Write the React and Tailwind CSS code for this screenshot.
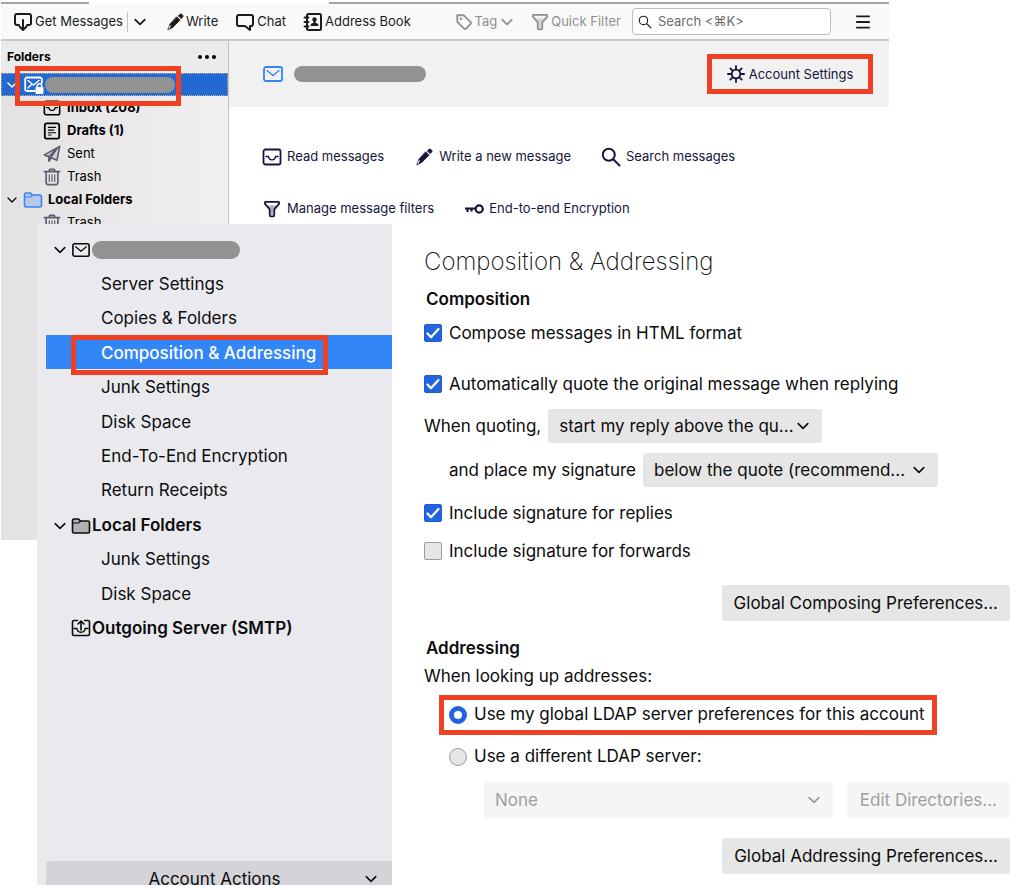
import React from "react";

function Svg({ size = 20, className = "", children, sw = 2 }) {
  return (
    <svg
      width={size}
      height={size}
      viewBox="0 0 20 20"
      fill="none"
      stroke="currentColor"
      strokeWidth={sw}
      strokeLinecap="round"
      strokeLinejoin="round"
      aria-hidden="true"
      className={"shrink-0 " + className}
    >
      {children}
    </svg>
  );
}

const Chevron = ({ size = 12, sw = 3, className = "" }) => (
  <Svg size={size} sw={sw} className={className}>
    <path d="M2 6l8 8 8-8" />
  </Svg>
);

const GetIcon = () => (
  <Svg>
    <path d="M6 13H4a2 2 0 0 1-2-2V4a2 2 0 0 1 2-2h12a2 2 0 0 1 2 2v7a2 2 0 0 1-2 2h-2" />
    <path d="M10 8v10M6.500 14.500L10 18l3.500-3.500" />
  </Svg>
);

const PencilIcon = ({ size = 18 }) => (
  <Svg size={size} sw={1}>
    <path d="M12 4.500l3.500 3.500-8 8-5.500 2.500 2.500-6z" fill="currentColor" />
    <path d="M14 3l1.500-1.500a1.500 1.500 0 0 1 2 0l1 1a1.500 1.500 0 0 1 0 2L17 6z" fill="currentColor" />
    <path d="M4.800 14.200l-1.600 2.800" stroke="#fff" strokeWidth="1.200" />
  </Svg>
);

const ChatIcon = () => (
  <Svg>
    <path d="M4 3h12a2 2 0 0 1 2 2v7a2 2 0 0 1-2 2h-1v4l-5-4H4a2 2 0 0 1-2-2V5a2 2 0 0 1 2-2z" />
  </Svg>
);

const BookIcon = () => (
  <Svg>
    <rect x="4" y="2" width="14" height="16" rx="1.500" />
    <path d="M1.500 5.500h4M1.500 10h4M1.500 14.500h4" strokeWidth="1.800" />
    <circle cx="11.500" cy="7.500" r="2.200" fill="currentColor" stroke="none" />
    <path d="M7.500 14c0-2.500 1.500-3 4-3.500 2.500.5 4 1 4 3.500z" fill="currentColor" stroke="none" />
    <path d="M10.500 8.500h2v3h-2z" fill="currentColor" stroke="none" />
  </Svg>
);

const TagIcon = () => (
  <Svg size={18}>
    <path d="M2.500 2.500h6.500a2 2 0 0 1 1.400.6l7 7a1.500 1.500 0 0 1 0 2.100l-5.200 5.200a1.500 1.500 0 0 1-2.100 0l-7-7a2 2 0 0 1-.6-1.400z" />
    <circle cx="6.500" cy="6.500" r="1" fill="currentColor" strokeWidth="1" />
  </Svg>
);

const FunnelIcon = ({ size = 18 }) => (
  <Svg size={size}>
    <path d="M2.500 2h15L18 4l-5.500 6.500V17a1.200 1.200 0 0 1-1.200 1.200H8.700A1.200 1.200 0 0 1 7.500 17v-6.500L2 4z" />
    <path d="M5 6h10l-3.500 4.500v6h-3v-6z" fill="currentColor" fillOpacity=".35" stroke="none" />
  </Svg>
);

const SearchIcon = ({ size = 20, sw = 2 }) => (
  <Svg size={size} sw={sw}>
    <circle cx="7.800" cy="7.800" r="6" />
    <path d="M12.500 12.500L18.500 18.500" />
  </Svg>
);

const MailIcon = ({ size = 20, className = "" }) => (
  <Svg size={size} className={className} sw={1.8}>
    <rect x="1" y="3" width="18" height="14" rx="2" />
    <path d="M4 6.500l6 5 6-5" strokeWidth="1.400" />
  </Svg>
);

const InboxIcon = ({ size = 20, className = "" }) => (
  <Svg size={size} className={className} sw={1.8}>
    <rect x="1.500" y="2.500" width="17" height="15" rx="2" />
    <path d="M4 9.500h2.500c.5 4.500 6.500 4.500 7 0H16" strokeWidth="1.400" />
  </Svg>
);

const DraftIcon = () => (
  <Svg size={18} sw={2}>
    <rect x="2" y="1.500" width="16" height="17" rx="2" />
    <path d="M6 6h8M6 9h6M6 12h8M6 14.500h3" strokeWidth="1.200" />
  </Svg>
);

const SentIcon = () => (
  <Svg size={18} sw={1.8} className="text-[#5b5b72]">
    <path d="M18.500 1.500L1.500 11l5 2 9-9-7 10 7 3z" fill="currentColor" fillOpacity=".15" />
    <path d="M6.500 13v5l2.500-3.500" />
  </Svg>
);

const TrashIcon = () => (
  <Svg size={18} sw={1.8} className="text-[#5b5b72]">
    <path d="M1.500 4h17M7 4V2.500A1 1 0 0 1 8 1.500h4a1 1 0 0 1 1 1V4M3.500 4.500V16a2.500 2.500 0 0 0 2.500 2.500h8a2.500 2.500 0 0 0 2.500-2.500V4.500" />
    <path d="M7 7.500v7.500M10 7.500v7.500M13 7.500v7.500" strokeWidth="1.300" />
  </Svg>
);

const FolderIcon = ({ className = "", fill }) => (
  <Svg size={20} sw={1.6} className={className}>
    <path d="M1.500 15.500v-11A1.500 1.500 0 0 1 3 3h4.500l2 2H17a1.500 1.500 0 0 1 1.500 1.500v9A1.500 1.500 0 0 1 17 17H3a1.500 1.500 0 0 1-1.500-1.500z" fill={fill} />
    <path d="M2 7h5.500l2-2" strokeWidth="1.200" />
  </Svg>
);

const LockMailIcon = () => (
  <Svg size={20} className="text-white" sw={1.8}>
    <path d="M11 16H3a1.800 1.800 0 0 1-1.800-1.800V4.300A1.800 1.800 0 0 1 3 2.500h13a1.800 1.800 0 0 1 1.800 1.800V8" />
    <path d="M4 5.500l5.500 4.500L15 5.500M4 13l3.500-3.500" strokeWidth="1.400" />
    <rect x="11.500" y="12" width="8" height="7" rx="1" fill="currentColor" stroke="none" />
    <path d="M13.300 12v-1a2.200 2.200 0 0 1 4.400 0v1" strokeWidth="1.600" />
  </Svg>
);

const GearIcon = () => (
  <Svg size={18} sw={2}>
    <circle cx="10" cy="10" r="4.800" />
    <path d="M10 5V1M10 19v-4M5 10H1M19 10h-4M6.500 6.500L3.700 3.700M16.300 16.300l-2.800-2.800M6.500 13.500l-2.800 2.800M16.300 3.700l-2.800 2.800" />
  </Svg>
);

const KeyIcon = () => (
  <Svg size={20} sw={2.2}>
    <circle cx="15.200" cy="10" r="3.600" />
    <path d="M11.500 9.500H1M3.500 9.500v3.500M7.500 9.500v3" strokeLinecap="butt" />
  </Svg>
);

const OutgoingIcon = () => (
  <Svg size={20} sw={1.6}>
    <path d="M6.500 2.500H3A1.500 1.500 0 0 0 1.500 4v12A1.500 1.500 0 0 0 3 17.500h14a1.500 1.500 0 0 0 1.500-1.500V4A1.500 1.500 0 0 0 17 2.500h-3.500" />
    <path d="M10 12V3M7 6l3-3 3 3" />
    <path d="M3 10.500h3c0 5 8 5 8 0h3" strokeWidth="1.300" />
  </Svg>
);

const Redacted = ({ className }) => (
  <span className={"block rounded-full bg-[#929292] " + className} />
);

function ToolButton({ icon, children, className = "" }) {
  return (
    <button type="button" className={"flex items-center gap-[2px] whitespace-nowrap " + className}>
      {icon}
      <span className="pt-px">{children}</span>
    </button>
  );
}

function Toolbar() {
  return (
    <div className="flex h-[37px] items-center border-b-2 border-[#c6c6c6] bg-[#f9f9f9] pl-3 pr-[18px] text-[13px] text-[#1b1b1b]">
      <ToolButton icon={<GetIcon />}>Get Messages</ToolButton>
      <button type="button" aria-label="More" className="ml-1 flex h-5 items-center border-l border-[#c4c4c4] pl-[6px]">
        <Chevron />
      </button>
      <ToolButton icon={<PencilIcon />} className="ml-5">Write</ToolButton>
      <ToolButton icon={<ChatIcon />} className="ml-[17px]">Chat</ToolButton>
      <ToolButton icon={<BookIcon />} className="ml-[17px]">Address Book</ToolButton>
      <ToolButton icon={<TagIcon />} className="ml-auto text-[#8f8f8f]">
        <span className="flex items-center gap-1">
          Tag
          <Chevron />
        </span>
      </ToolButton>
      <ToolButton icon={<FunnelIcon />} className="ml-[18px] text-[#8f8f8f]">Quick Filter</ToolButton>
      <label className="ml-[11px] flex h-[27px] w-[199px] items-center gap-[6px] rounded border border-[#bdbdbd] bg-white px-[5px]">
        <SearchIcon size={14} sw={1.6} />
        <input
          type="text"
          aria-label="Search"
          placeholder="Search &lt;⌘K&gt;"
          className="w-full min-w-0 bg-transparent outline-none placeholder:text-[#6b6b6b]"
        />
      </label>
      <button type="button" aria-label="Menu" className="ml-[24px]">
        <Svg size={16} sw={2.2}>
          <path d="M1.500 3h17M1.500 10h17M1.500 17h17" strokeLinecap="butt" />
        </Svg>
      </button>
    </div>
  );
}

function FolderRow({ icon, label, bold }) {
  return (
    <li className="flex h-[23px] items-center pl-[42px]">
      <span className="flex w-6 shrink-0">{icon}</span>
      <span className={bold ? "font-bold" : ""}>{label}</span>
    </li>
  );
}

function FolderPane() {
  return (
    <aside className="flex w-[228px] shrink-0 flex-col border-r border-[#c2c2c2] bg-linear-to-r from-[#e3e1e1] to-[#f1efef] text-[13px] text-black">
      <div className="flex h-8 items-center justify-between bg-[#ebebeb] pl-[6px] pr-3">
        <h2 className="text-[12px] font-bold">Folders</h2>
        <button type="button" aria-label="Folder options" className="flex gap-[3px]">
          <span className="size-[4px] rounded-full bg-black" />
          <span className="size-[4px] rounded-full bg-black" />
          <span className="size-[4px] rounded-full bg-black" />
        </button>
      </div>
      <ul>
        <li className="relative flex h-[23px] items-center border border-dotted border-[#c3b98f] bg-[#2269d3] pl-[5px] text-white">
          <Chevron size={10} />
          <span className="ml-[7px] flex">
            <LockMailIcon />
          </span>
          <Redacted className="ml-[1px] h-4 w-[130px]" />
          <span className="pointer-events-none absolute -top-[8px] left-[13px] h-10 w-[166px] border-[5px] border-[#ee4023]" />
        </li>
        <FolderRow icon={<InboxIcon size={18} />} label="Inbox (208)" bold />
        <FolderRow icon={<DraftIcon />} label="Drafts (1)" bold />
        <FolderRow icon={<SentIcon />} label="Sent" />
        <FolderRow icon={<TrashIcon />} label="Trash" />
        <li className="flex h-[23px] items-center pl-[6px] font-bold">
          <Chevron size={10} sw={2.4} />
          <FolderIcon className="ml-[6px] mr-[5px] text-[#3b86f2]" fill="#b7c9ea" />
          Local Folders
        </li>
        <FolderRow icon={<TrashIcon />} label="Trash" />
      </ul>
    </aside>
  );
}

function ActionLink({ icon, children }) {
  return (
    <a href="#" className="flex items-center gap-[5px] whitespace-nowrap">
      <span className="flex w-5 justify-center">{icon}</span>
      <span>{children}</span>
    </a>
  );
}

function MailWindow() {
  return (
    <section className="mr-[135px] mt-[2px] flex h-[538px] flex-col pl-[1px] [grid-area:1/1]">
      <div className="flex h-[2px] shrink-0 justify-between">
        <span className="w-[88px] bg-[#a3a3a3]" />
        <span className="ml-[240px] flex-1 bg-[#a3a3a3]" />
      </div>
      <Toolbar />
      <div className="flex flex-1">
        <FolderPane />
        <div className="flex-1 text-[13px] text-[#15153c]">
          <div className="flex h-[66px] items-center bg-[#f1f1f1] pl-[34px] pr-4">
            <MailIcon className="text-[#3585f7]" />
            <Redacted className="ml-[11px] h-4 w-[132px]" />
            <button
              type="button"
              className="ml-auto flex h-10 w-[166px] items-center justify-center gap-1 whitespace-nowrap border-[5px] border-[#ee4023]"
            >
              <GearIcon />
              <span className="pt-px">Account Settings</span>
            </button>
          </div>
          <nav className="flex flex-col gap-8 pl-[33px] pt-10">
            <div className="flex h-5 gap-[30px]">
              <ActionLink icon={<InboxIcon />}>Read messages</ActionLink>
              <ActionLink icon={<PencilIcon />}>Write a new message</ActionLink>
              <ActionLink icon={<SearchIcon />}>Search messages</ActionLink>
            </div>
            <div className="flex h-5 gap-[30px]">
              <ActionLink icon={<FunnelIcon />}>Manage message filters</ActionLink>
              <ActionLink icon={<KeyIcon />}>End-to-end Encryption</ActionLink>
            </div>
          </nav>
        </div>
      </div>
    </section>
  );
}

function AccountItem({ children, selected }) {
  return (
    <li>
      <a
        href="#"
        className={
          selected
            ? "relative flex h-[34px] items-center bg-[#3386f7] pl-[55px] pt-[2px] font-medium text-white"
            : "flex h-[34px] items-center pl-[55px] pt-[2px]"
        }
      >
        {children}
        {selected && (
          <span className="pointer-events-none absolute left-[25px] top-0 h-10 w-[257px] border-[5px] border-[#ee4023]" />
        )}
      </a>
    </li>
  );
}

function AccountTree() {
  return (
    <aside className="flex w-[355px] shrink-0 flex-col bg-[#eaeaee] pl-[9px] pt-2 text-[17px] text-[#0c0c0d]">
      <ul className="flex h-[413px] flex-col justify-between">
        <li className="flex h-[34px] items-center pl-2 pt-[2px]">
          <Chevron sw={2.6} />
          <MailIcon size={18} className="ml-[6px] mr-[2px]" />
          <Redacted className="h-[18px] w-[148px]" />
        </li>
        <AccountItem>Server Settings</AccountItem>
        <AccountItem>Copies &amp; Folders</AccountItem>
        <AccountItem selected>Composition &amp; Addressing</AccountItem>
        <AccountItem>Junk Settings</AccountItem>
        <AccountItem>Disk Space</AccountItem>
        <AccountItem>End-To-End Encryption</AccountItem>
        <AccountItem>Return Receipts</AccountItem>
        <li className="flex h-[34px] items-center pl-2 pt-[2px] font-semibold">
          <Chevron sw={2.6} />
          <FolderIcon className="ml-[5px] mr-[1px]" fill="#b1b1b3" />
          Local Folders
        </li>
        <AccountItem>Junk Settings</AccountItem>
        <AccountItem>Disk Space</AccountItem>
        <li className="flex h-[34px] items-center pl-[25px] pt-px font-semibold">
          <span className="mr-[1px] flex">
            <OutgoingIcon />
          </span>
          Outgoing Server (SMTP)
        </li>
      </ul>
      <button type="button" className="mt-auto flex h-6 items-start rounded-tl bg-[#d4d3d8] pl-[18px] pr-[15px] pt-2 leading-5">
        <span className="flex-1">Account Actions</span>
        <span className="flex h-5 items-center">
          <Chevron sw={2.6} />
        </span>
      </button>
    </aside>
  );
}

function Check({ label, checked, className = "" }) {
  return (
    <label className={"flex h-6 w-fit items-center gap-[7px] whitespace-nowrap " + className}>
      <span className="grid size-[18px] place-items-center">
        <input
          type="checkbox"
          defaultChecked={checked}
          className="peer size-[18px] appearance-none rounded-[2px] border border-[#9b9b9b] bg-[#e6e6e6] [grid-area:1/1] checked:border-[#1f5cd4] checked:bg-[#2363de]"
        />
        <svg viewBox="0 0 18 18" fill="none" stroke="white" strokeWidth="2.200" strokeLinecap="round" strokeLinejoin="round" className="pointer-events-none hidden size-[18px] [grid-area:1/1] peer-checked:block">
          <path d="M3.500 9.500l3.500 3.800L14.500 5" />
        </svg>
      </span>
      <span className="pt-[2px]">{label}</span>
    </label>
  );
}

function Radio({ label, checked }) {
  return (
    <label className="flex h-6 items-center gap-[7px] whitespace-nowrap">
      <input
        type="radio"
        name="ldap"
        defaultChecked={checked}
        className="size-[18px] appearance-none rounded-full border border-[#9b9b9b] bg-[#e6e6e6] checked:border-[5px] checked:border-[#2363de] checked:bg-white"
      />
      <span>{label}</span>
    </label>
  );
}

function Select({ id, label, value, className, disabled }) {
  return (
    <span className={"grid items-center " + className}>
      <select
        id={id}
        aria-label={label}
        disabled={disabled}
        className="h-full w-full appearance-none rounded-[3px] bg-[#e6e6e6] pl-[11px] pr-6 pt-[2px] [grid-area:1/1] disabled:bg-[#f5f5f5] disabled:text-[#a0a0a0] disabled:opacity-100"
      >
        <option>{value}</option>
      </select>
      <span className={"pointer-events-none mr-[13px] justify-self-end [grid-area:1/1] " + (disabled ? "text-[#9a9a9a]" : "")}>
        <Chevron sw={2.8} />
      </span>
    </span>
  );
}

function Settings() {
  return (
    <main className="min-w-0 flex-1 bg-white pb-[11px] pl-8 pr-[14px] pt-5 text-[17px] text-[#0c0c0d]">
      <h1 className="text-[24px] font-extralight leading-9">Composition &amp; Addressing</h1>
      <h2 className="mt-[7px] pl-[2px] font-semibold leading-6">Composition</h2>
      <Check label="Compose messages in HTML format" checked className="mt-[10px]" />
      <Check label="Automatically quote the original message when replying" checked className="mt-[27px]" />
      <div className="mt-[13px] flex items-center gap-[7px] whitespace-nowrap">
        <label htmlFor="quoting" className="pt-[2px]">When quoting,</label>
        <Select id="quoting" value="start my reply above the qu..." className="h-[34px] w-[274px]" />
      </div>
      <div className="mt-[10px] flex items-center gap-[7px] whitespace-nowrap pl-[25px]">
        <label htmlFor="signature" className="pt-[2px]">and place my signature</label>
        <Select id="signature" value="below the quote (recommend..." className="h-[34px] w-[295px]" />
      </div>
      <Check label="Include signature for replies" checked className="mt-[14px]" />
      <Check label="Include signature for forwards" className="mt-[14px]" />
      <div className="mt-[22px] flex justify-end">
        <button type="button" className="h-9 whitespace-nowrap rounded-[3px] bg-[#e6e6e6] px-3 pt-[2px]">Global Composing Preferences...</button>
      </div>
      <h2 className="mt-[15px] pl-[2px] font-semibold leading-6">Addressing</h2>
      <p className="mt-1 leading-6">When looking up addresses:</p>
      <div className="ml-[15px] mt-[7px] flex h-10 w-[498px] items-center border-[5px] border-[#ee4023] pl-[5px]">
        <Radio label="Use my global LDAP server preferences for this account" checked />
      </div>
      <div className="ml-[25px] mt-[10px]">
        <Radio label="Use a different LDAP server:" />
      </div>
      <div className="mt-[13px] flex gap-[14px] pl-[60px]">
        <Select label="LDAP server" value="None" className="h-9 flex-1" disabled />
        <button type="button" disabled className="h-9 whitespace-nowrap rounded-[3px] bg-[#f5f5f5] px-[13px] pt-[2px] text-[#a0a0a0]">Edit Directories...</button>
      </div>
      <div className="mt-5 flex justify-end">
        <button type="button" className="h-9 whitespace-nowrap rounded-[3px] bg-[#e6e6e6] px-3 pt-[2px]">Global Addressing Preferences...</button>
      </div>
    </main>
  );
}

export default function App() {
  return (
    <div className="grid min-h-screen grid-cols-1 items-start bg-white font-['Inter',sans-serif]">
      <MailWindow />
      <section className="relative ml-[37px] mt-[224px] flex [grid-area:1/1]">
        <AccountTree />
        <Settings />
      </section>
    </div>
  );
}
